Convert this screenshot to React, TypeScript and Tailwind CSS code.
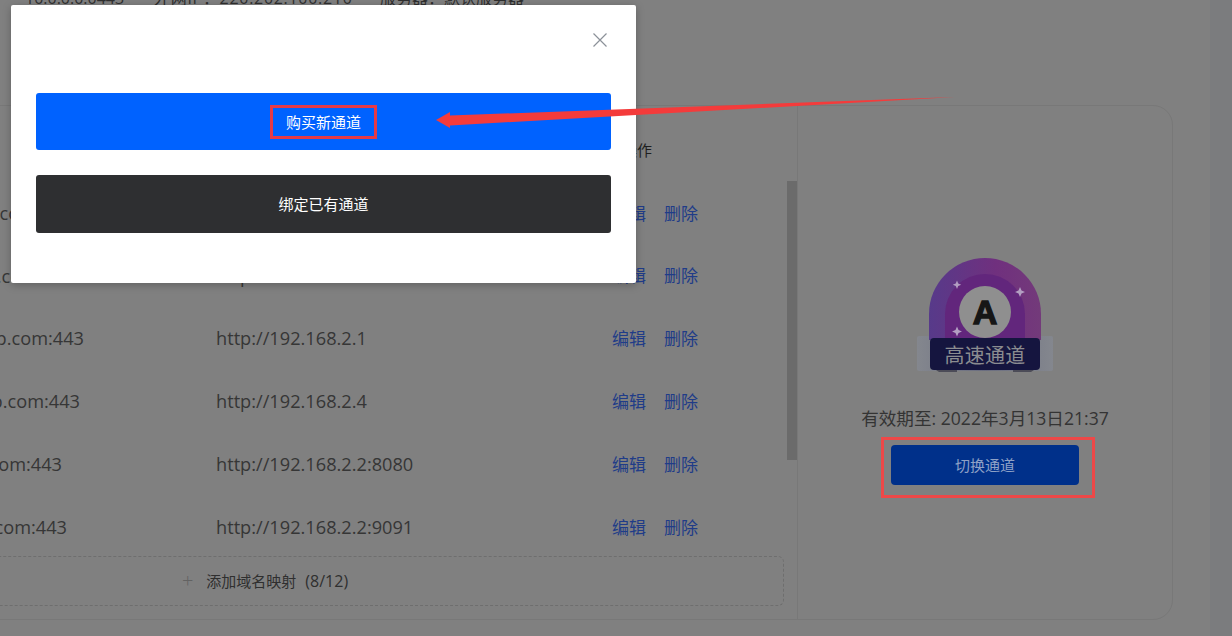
const font = "font-['Open_Sans','Noto_Sans_CJK_SC',sans-serif]";

const rows = [
  { domain: "demo.example.com:443", target: "http://192.168.2.3", pr: "pr-[144px]" },
  { domain: "shop.example.com:443", target: "http://192.168.2.5", pr: "pr-[142px]" },
  { domain: "demo.weblab.com:443", target: "http://192.168.2.1", pr: "pr-[132px]" },
  { domain: "demo.weblab.com:443", target: "http://192.168.2.4", pr: "pr-[136px]" },
  { domain: "demo.web.com:443", target: "http://192.168.2.2:8080", pr: "pr-[154px]" },
  { domain: "demo.web.com:443", target: "http://192.168.2.2:9091", pr: "pr-[149px]" },
];

function Badge() {
  return (
    <svg width="140" height="118" viewBox="0 0 140 118" className="block">
      <defs>
        <linearGradient id="arch" x1="0" y1="0" x2="1" y2="0">
          <stop offset="0" stopColor="#573a8a" />
          <stop offset="0.6" stopColor="#70307e" />
          <stop offset="1" stopColor="#733a7a" />
        </linearGradient>
        <linearGradient id="band" x1="0" y1="0" x2="1" y2="0">
          <stop offset="0" stopColor="#84878e" />
          <stop offset="0.5" stopColor="#6a6d80" />
          <stop offset="1" stopColor="#84878e" />
        </linearGradient>
      </defs>
      <rect x="2" y="80" width="136" height="35" rx="2" fill="url(#band)" />
      <path d="M14 84V58a56 56 0 0 1 112 0v26z" fill="url(#arch)" />
      <path d="M30 84V58a40 40 0 0 1 80 0v26z" fill="#62267c" />
      <circle cx="70" cy="56" r="26" fill="#8f8f8f" />
      <text x="70" y="68" textAnchor="middle" fontFamily="'Liberation Sans',sans-serif" fontWeight="900" fontSize="34" fill="#161616" stroke="#161616" strokeWidth="1.4">A</text>
      <path d="M42 24.5l1.2 3 3 1.2-3 1.2-1.2 3-1.2-3-3-1.2 3-1.2z" fill="#b39fc2" />
      <path d="M105 31l1.5 3.5 3.5 1.5-3.5 1.5-1.5 3.5-1.5-3.5-3.5-1.5 3.5-1.5z" fill="#b39fc2" />
      <path d="M42 70.5l1.5 3.5 3.5 1.5-3.5 1.5-1.5 3.5-1.5-3.5-3.5-1.5 3.5-1.5z" fill="#b39fc2" />
      <path d="M18 112h24v4H24zM98 112h24l-6 4H98z" fill="#4c4c58" />
      <rect x="15" y="82" width="110" height="32" rx="4" fill="#15153f" />
      <text x="70" y="107" textAnchor="middle" fontFamily="'Noto Sans CJK SC',sans-serif" fontSize="20" letterSpacing="0.3" fill="#8b8c90">高速通道</text>
    </svg>
  );
}

export default function App() {
  return (
    <div className={`relative h-[636px] w-[1232px] overflow-hidden bg-[#808080] ${font}`}>
      <div className="flex h-full">
        <div className="min-w-0 flex-1">
          <div className="-mt-[12px] flex h-[20px] items-center pl-[8px] text-[16px] leading-[20px] text-[#2f2f2f]">
            <span className="w-[17px]">•</span>
            <span className="w-[129px] whitespace-nowrap">10.0.0.0:0443</span>
            <span className="w-[226px] whitespace-nowrap tracking-[0.7px]">外网IP：220.202.100.210</span>
            <span className="whitespace-nowrap">服务器：默认服务器</span>
          </div>
          <div className="-ml-[60px] mt-[97px] flex h-[515px] w-[1233px] rounded-[20px] border border-[#787878]">
            <div className="relative min-w-0 flex-1 overflow-hidden">
              <div className="flex h-[76px] items-end pb-[22px] text-[15px] leading-[20px] text-[#1f1f1f]">
                <div className="w-[275px] pl-[80px]">外网地址</div>
                <div className="w-[406px]">内网地址</div>
                <div>操作</div>
              </div>
              {rows.map((r, i) => (
                <div key={i} className="flex h-[62.8px] items-center text-[18.2px] text-[#363636]">
                  <div className={`flex w-[275px] shrink-0 justify-end overflow-hidden whitespace-nowrap ${r.pr}`}>
                    <span className="shrink-0">{r.domain}</span>
                  </div>
                  <div className="w-[396px] shrink-0 whitespace-nowrap">{r.target}</div>
                  <div className="flex gap-[18px] text-[17px] text-[#203c88]">
                    <span>编辑</span>
                    <span>删除</span>
                  </div>
                </div>
              ))}
              <div className="-ml-[189px] -mt-[3px] flex h-[50px] w-[1032px] items-center justify-center rounded-[6px] border border-dashed border-[#6e6e6e] pr-[6px] text-[15px] text-[#2f2f2f]">
                <span className="mr-[13px] text-[20px] font-light leading-none text-[#626262]">+</span>
                <span className="whitespace-nowrap">添加域名映射</span>
                <span className="ml-[9px] whitespace-nowrap text-[16px]">(8/12)</span>
              </div>
              <div className="absolute right-0 top-[75px] h-[279px] w-[10px] bg-[#6b6b6b]" />
            </div>
            <div className="flex w-[375px] shrink-0 flex-col items-center border-l border-[#787878] pt-[150px] text-[#333333]">
              <div className="h-[118px]">
                <Badge />
              </div>
              <div className="mt-[31px] whitespace-nowrap text-[17.6px] leading-[26px] text-[#343434]">有效期至: 2022年3月13日21:37</div>
              <div className="ml-[6px] mt-[6px] border-[3px] border-[#ee4848] pb-[10px] pl-[7px] pr-[13px] pt-[5px]">
                <button className="flex h-[40px] w-[188px] items-center justify-center rounded-[4px] bg-[#00308a] text-[15px] text-[#8ea1c6]">切换通道</button>
              </div>
            </div>
          </div>
        </div>
        <div className="w-[22px] shrink-0 bg-[#7b7c7e]" />
      </div>

      <div className="absolute left-[11px] top-[5px] h-[278px] w-[625px] rounded-[2px] bg-white px-[25px] pt-[88px] shadow-[0_2px_8px_rgba(0,0,0,0.25)]">
        <svg className="absolute right-[29px] top-[28px]" width="14" height="14" viewBox="0 0 14 14" fill="none" stroke="#8b9199" strokeWidth="1.2">
          <path d="M0.5 0.5l13 13M13.5 0.5l-13 13" />
        </svg>
        <div className="flex h-[57px] items-center justify-center rounded-[3px] bg-[#0062ff] text-[15px] text-white">
          <span className="border-[3px] border-[#e63a48] px-[13px] py-[4px] leading-[20px]">购买新通道</span>
        </div>
        <div className="mt-[25px] flex h-[58px] items-center justify-center rounded-[3px] bg-[#2e2f31] text-[15px] text-white">绑定已有通道</div>
      </div>

      <svg className="pointer-events-none absolute left-0 top-0" width="1232" height="636">
        <path d="M436 120L450 112L450 115.5L955 97L450 125.5L450 128Z" fill="#f43b3b" />
      </svg>
    </div>
  );
}
